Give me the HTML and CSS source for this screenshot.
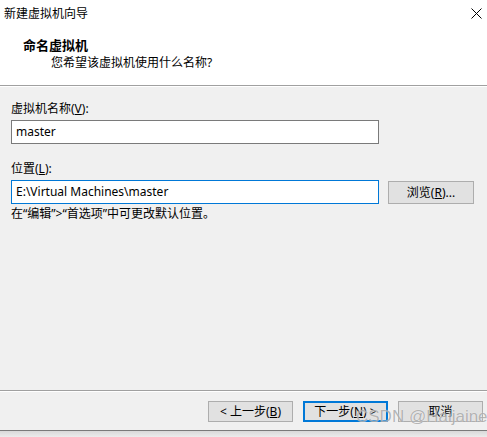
FILE: index.html
```html
<!DOCTYPE html>
<html lang="zh-CN">
<head>
<meta charset="utf-8">
<title>新建虚拟机向导</title>
<link rel="stylesheet" href="styles.css">
</head>
<body>
<div class="window">
  <div class="header">
    <div class="titlebar">
      <span class="title">新建虚拟机向导</span>
      <svg class="close" width="11" height="11" viewBox="0 0 11 11"><path d="M0.5 0.5 L10.5 10.5 M10.5 0.5 L0.5 10.5" stroke="#000" stroke-width="1" fill="none"/></svg>
    </div>
    <div class="heading">命名虚拟机</div>
    <div class="subheading">您希望该虚拟机使用什么名称?</div>
  </div>
  <div class="sep"></div>
  <div class="content">
    <div class="label">虚拟机名称(<u>V</u>):</div>
    <div class="field">master</div>
    <div class="label label-2">位置(<u>L</u>):</div>
    <div class="row">
      <div class="field focused">E:\Virtual Machines\master</div>
      <div class="btn browse">浏览(<u>R</u>)...</div>
    </div>
    <div class="hint">在“编辑”&gt;“首选项”中可更改默认位置。</div>
  </div>
  <div class="sep"></div>
  <div class="footer">
    <div class="btn">&lt; 上一步(<u>B</u>)</div>
    <div class="btn default">下一步(<u>N</u>) &gt;</div>
    <div class="btn">取消</div>
  </div>
  <div class="bottom-edge"></div>
  <div class="watermark">CSDN @Haijaine</div>
</div>
</body>
</html>
```
FILE: styles.css
```css
* { box-sizing: border-box; }
html, body { margin: 0; padding: 0; }
body {
  width: 487px;
  height: 437px;
  overflow: hidden;
  background: #f0f0f0;
  font-family: "Noto Sans", "Noto Sans CJK SC", sans-serif;
  font-size: 12px;
  color: #000;
}
.window {
  position: relative;
  height: 437px;
  display: flex;
  flex-direction: column;
}
.header {
  background: #fff;
  height: 85px;
  flex: none;
}
.titlebar {
  height: 28px;
  display: flex;
  align-items: center;
  justify-content: space-between;
  padding: 0 5px 0 4px;
}
.title { line-height: 28px; }
.close { display: block; margin-top: -1px; }
.heading {
  margin: 8px 0 0 23px;
  font-size: 13px;
  font-weight: bold;
  line-height: 18px;
}
.subheading {
  margin-left: 51px;
  line-height: 17px;
}
.sep {
  flex: none;
  height: 2px;
  border-top: 1px solid #a0a0a0;
  border-bottom: 1px solid #ffffff;
}
.content {
  flex: 1;
  padding: 14px 0 0 11px;
}
.label {
  line-height: 16px;
  margin-bottom: 3px;
}
.label-2 { margin-top: 17px; }
.field {
  width: 368px;
  height: 24px;
  background: #fff;
  border: 1px solid #7a7a7a;
  padding: 0 4px;
  line-height: 22px;
  white-space: nowrap;
}
.field.focused { border-color: #0078d7; }
.row {
  display: flex;
  align-items: flex-start;
  gap: 9px;
}
.btn {
  width: 85px;
  height: 21px;
  background: #e1e1e1;
  border: 1px solid #adadad;
  display: flex;
  align-items: center;
  justify-content: center;
  line-height: 16px;
  white-space: nowrap;
}
.browse {
  width: 86px;
  height: 23px;
  margin-top: 1px;
}
.hint {
  margin-top: 2px;
  line-height: 16px;
}
.footer {
  flex: none;
  display: flex;
  justify-content: flex-end;
  gap: 10px;
  padding: 9px 4px 0 0;
  height: 38px;
}
.btn.default {
  border: 2px solid #0078d7;
}
.bottom-edge {
  flex: none;
  height: 7px;
  border-top: 1px solid #7a7a7a;
  background: linear-gradient(#d9d9d9, #ececec);
}
.watermark {
  position: absolute;
  left: 356px;
  top: 407px;
  font-family: "Liberation Sans", Arial, sans-serif;
  font-size: 17px;
  line-height: 20px;
  color: rgba(120, 120, 120, 0.55);
  text-shadow: 0 0 1px rgba(255, 255, 255, 0.9);
  white-space: nowrap;
}
```
